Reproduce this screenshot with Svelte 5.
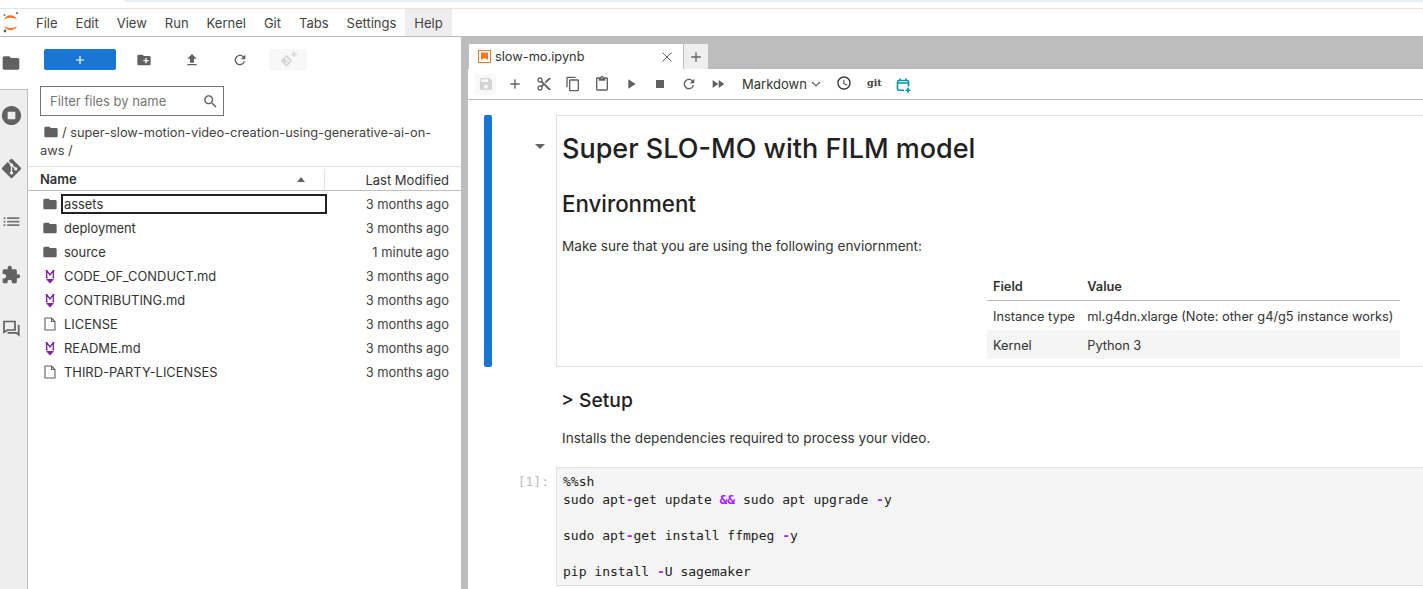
<script>
  const menus = ['File', 'Edit', 'View', 'Run', 'Kernel', 'Git', 'Tabs', 'Settings', 'Help'];
  const files = [
    { name: 'assets', kind: 'folder', time: '3 months ago', editing: true },
    { name: 'deployment', kind: 'folder', time: '3 months ago' },
    { name: 'source', kind: 'folder', time: '1 minute ago' },
    { name: 'CODE_OF_CONDUCT.md', kind: 'md', time: '3 months ago' },
    { name: 'CONTRIBUTING.md', kind: 'md', time: '3 months ago' },
    { name: 'LICENSE', kind: 'file', time: '3 months ago' },
    { name: 'README.md', kind: 'md', time: '3 months ago' },
    { name: 'THIRD-PARTY-LICENSES', kind: 'file', time: '3 months ago' }
  ];
  const codeLines = [
    [['%%sh', '']],
    [['sudo apt', ''], ['-', 'op'], ['get update ', ''], ['&&', 'op'], [' sudo apt upgrade ', ''], ['-', 'op'], ['y', '']],
    [],
    [['sudo apt', ''], ['-', 'op'], ['get install ffmpeg ', ''], ['-', 'op'], ['y', '']],
    [],
    [['pip install ', ''], ['-', 'op'], ['U sagemaker', '']]
  ];
  const P = {
    folder: 'M10 4H4c-1.1 0-1.99.9-1.99 2L2 18c0 1.1.9 2 2 2h16c1.1 0 2-.9 2-2V8c0-1.1-.9-2-2-2h-8l-2-2z',
    newFolder: 'M20 6h-8l-2-2H4c-1.11 0-1.99.89-1.99 2L2 18c0 1.11.89 2 2 2h16c1.11 0 2-.89 2-2V8c0-1.11-.89-2-2-2zm-1 8h-3v3h-2v-3h-3v-2h3V9h2v3h3v2z',
    upload: 'M9 16h6v-6h4l-7-7-7 7h4zm-4 2h14v2H5z',
    refresh: 'M17.65 6.35C16.2 4.9 14.21 4 12 4c-4.42 0-7.99 3.58-7.99 8s3.57 8 7.99 8c3.73 0 6.84-2.55 7.73-6h-2.08c-.82 2.33-3.04 4-5.65 4-3.31 0-6-2.69-6-6s2.69-6 6-6c1.66 0 3.14.69 4.22 1.78L13 11h7V4l-2.35 2.35z',
    stop: 'M12 2C6.48 2 2 6.48 2 12s4.48 10 10 10 10-4.48 10-10S17.52 2 12 2zm4 14H8V8h8v8z',
    git: 'M21.6 11L13 2.4a1.4 1.4 0 0 0-2 0L9.2 4.2l2.3 2.3a1.7 1.7 0 0 1 2.1 2.1l2.2 2.2a1.7 1.7 0 1 1-1 1l-2.1-2.1v5.4a1.7 1.7 0 1 1-1.4 0V9.7a1.7 1.7 0 0 1-.9-2.2L8 5.3 2.4 11a1.4 1.4 0 0 0 0 2l8.6 8.6a1.4 1.4 0 0 0 2 0l8.6-8.6a1.4 1.4 0 0 0 0-2z',
    toc: 'M3 13h2v-2H3v2zm0 4h2v-2H3v2zm0-8h2V7H3v2zm4 4h14v-2H7v2zm0 4h14v-2H7v2zM7 7v2h14V7H7z',
    puzzle: 'M20.5 11H19V7c0-1.1-.9-2-2-2h-4V3.5C13 2.12 11.88 1 10.5 1S8 2.12 8 3.5V5H4c-1.1 0-1.99.9-1.99 2v3.8H3.5c1.49 0 2.7 1.21 2.7 2.7s-1.21 2.7-2.7 2.7H2V20c0 1.1.9 2 2 2h3.8v-1.5c0-1.49 1.21-2.7 2.7-2.7 1.49 0 2.7 1.21 2.7 2.7V22H17c1.1 0 2-.9 2-2v-4h1.5c1.38 0 2.5-1.12 2.5-2.5S21.88 11 20.5 11z',
    search: 'M15.5 14h-.79l-.28-.27C15.41 12.59 16 11.11 16 9.5 16 5.91 13.09 3 9.5 3S3 5.91 3 9.5 5.91 16 9.5 16c1.61 0 3.09-.59 4.23-1.57l.27.28v.79l5 4.99L20.49 19l-4.99-5zm-6 0C7.01 14 5 11.99 5 9.5S7.01 5 9.5 5 14 7.01 14 9.5 11.99 14 9.5 14z',
    save: 'M17 3H5c-1.11 0-2 .9-2 2v14c0 1.1.89 2 2 2h14c1.1 0 2-.9 2-2V7l-4-4zm-5 16c-1.66 0-3-1.34-3-3s1.34-3 3-3 3 1.34 3 3-1.34 3-3 3zm3-10H5V5h10v4z',
    add: 'M19 13h-6v6h-2v-6H5v-2h6V5h2v6h6v2z',
    cut: 'M9.64 7.64c.23-.5.36-1.05.36-1.64 0-2.21-1.79-4-4-4S2 3.79 2 6s1.79 4 4 4c.59 0 1.14-.13 1.64-.36L10 12l-2.36 2.36C7.14 14.13 6.59 14 6 14c-2.21 0-4 1.79-4 4s1.79 4 4 4 4-1.79 4-4c0-.59-.13-1.14-.36-1.64L12 14l7 7h3v-1L9.64 7.64zM6 8c-1.1 0-2-.89-2-2s.9-2 2-2 2 .89 2 2-.9 2-2 2zm0 12c-1.1 0-2-.89-2-2s.9-2 2-2 2 .89 2 2-.9 2-2 2zm6-7.5c-.28 0-.5-.22-.5-.5s.22-.5.5-.5.5.22.5.5-.22.5-.5.5zM19 3l-6 6 2 2 7-7V3z',
    copy: 'M16 1H4c-1.1 0-2 .9-2 2v14h2V3h12V1zm3 4H8c-1.1 0-2 .9-2 2v14c0 1.1.9 2 2 2h11c1.1 0 2-.9 2-2V7c0-1.1-.9-2-2-2zm0 16H8V7h11v14z',
    paste: 'M19 2h-4.18C14.4.84 13.3 0 12 0c-1.3 0-2.4.84-2.82 2H5c-1.1 0-2 .9-2 2v16c0 1.1.9 2 2 2h14c1.1 0 2-.9 2-2V4c0-1.1-.9-2-2-2zm-7 0c.55 0 1 .45 1 1s-.45 1-1 1-1-.45-1-1 .45-1 1-1zm7 18H5V4h2v3h10V4h2v16z',
    run: 'M8 5v14l11-7z',
    square: 'M6 6h12v12H6z',
    ff: 'M4 18l8.5-6L4 6v12zm9-12v12l8.5-6L13 6z',
    clock: 'M11.99 2C6.47 2 2 6.48 2 12s4.47 10 9.99 10C17.52 22 22 17.52 22 12S17.52 2 11.99 2zM12 20c-4.42 0-8-3.58-8-8s3.58-8 8-8 8 3.58 8 8-3.58 8-8 8zm.5-13H11v6l5.25 3.15.75-1.23-4.5-2.67z'
  };
</script>

{#snippet icon(d, size = 16, cls = '')}
  <svg class="ic {cls}" width={size} height={size} viewBox="0 0 24 24"><path {d} /></svg>
{/snippet}

<div class="page">
  <div class="strip"><div class="pill"></div></div>
  <header class="menubar">
    <svg class="logo" width="22" height="27" viewBox="0 0 22 27">
      <path d="M4 11C5.500 4.500 15.500 4.500 17 11 14.500 8 6.500 8 4 11z" fill="#f37726" />
      <path d="M4 17C5.500 22.500 15.500 22.500 17 17 14.500 19.500 6.500 19.500 4 17z" fill="#f37726" />
      <circle cx="17" cy="4.200" r="1.100" fill="#767677" />
      <circle cx="4.400" cy="6" r="1" fill="#767677" />
      <circle cx="5" cy="22" r="1.400" fill="#616262" />
    </svg>
    <nav class="menus">
      {#each menus as m}
        <span class="menu" class:open={m === 'Help'}>{m}</span>
      {/each}
    </nav>
  </header>

  <div class="main">
    <aside class="rail">
      <div class="tab active">{@render icon(P.folder, 20)}</div>
      <div class="tab big">{@render icon(P.stop, 23)}</div>
      <div class="tab big">{@render icon(P.git, 23)}</div>
      <div class="tab">{@render icon(P.toc, 21, 'light')}</div>
      <div class="tab">{@render icon(P.puzzle, 20)}</div>
      <div class="tab">
        <svg class="chat" width="20" height="20" viewBox="0 0 20 20">
          <path d="M3 3.500h11v8.500H6.500L3 14.200z" />
          <path d="M6.500 14.800h9l2.200 2V6.800" />
        </svg>
      </div>
    </aside>

    <section class="browser">
      <div class="btoolbar">
        <button class="launch">{@render icon(P.add, 14, 'white')}</button>
        <span class="tb">{@render icon(P.newFolder, 16)}</span>
        <span class="tb">{@render icon(P.upload, 16)}</span>
        <span class="tb">{@render icon(P.refresh, 16)}</span>
        <span class="clone">
          <svg width="18" height="18" viewBox="0 0 24 24" class="ic faint">
            <path d={P.git} transform="translate(1 4) scale(.75)" />
            <path d="M19 1h2v2.500h2.500v2H21V8h-2V5.500h-2.500v-2H19z" />
          </svg>
        </span>
      </div>
      <div class="filter">
        <span>Filter files by name</span>
        {@render icon(P.search, 17)}
      </div>
      <div class="crumbs">
        <span class="crumbicon">{@render icon(P.folder, 16)}</span>/ super-slow-motion-video-creation-using-generative-ai-on-aws /
      </div>
      <div class="listhead">
        <div class="hname"><b>Name</b><i class="sort"></i></div>
        <div class="hmod">Last Modified</div>
      </div>
      <ul class="files">
        {#each files as f}
          <li>
            <span class="ficon">
              {#if f.kind === 'folder'}
                {@render icon(P.folder, 16)}
              {:else if f.kind === 'md'}
                <svg width="16" height="16" viewBox="0 0 16 16" class="md">
                  <path d="M3.500 2.600h1.300L8 6.900l3.200-4.300h1.300M4.700 2.600v7M11.300 2.600v7M3.700 9.700h2M10.300 9.700h2" />
                  <path class="mdfill" d="M3.800 11h8.400L8 15.500z" />
                </svg>
              {:else}
                <svg width="16" height="16" viewBox="0 0 16 16" class="doc">
                  <path d="M3 2h6.500L13 5.500V14H3z" /><path d="M9.500 2v3.500H13" />
                </svg>
              {/if}
            </span>
            <span class="fname" class:editing={f.editing}>{f.name}</span>
            <span class="ftime">{f.time}</span>
          </li>
        {/each}
      </ul>
    </section>

    <div class="splitter"></div>

    <section class="work">
      <div class="tabbar">
        <div class="doctab">
          <svg width="13" height="13" viewBox="0 0 13 13" class="nbicon">
            <rect x=".5" y=".5" width="12" height="12" fill="none" stroke="#f37726" />
            <path d="M3 2.500h7v7.500L6.500 8.100 3 10z" fill="#f37726" />
          </svg>
          <span class="doctitle">slow-mo.ipynb</span>
          <svg width="10" height="10" viewBox="0 0 10 10" class="close"><path d="M.5.5l9 9M9.500.5l-9 9" /></svg>
        </div>
        <div class="addtab">{@render icon(P.add, 16)}</div>
      </div>

      <div class="nbbar">
        <span class="nb saved">{@render icon(P.save, 16, 'faint')}</span>
        <span class="nb">{@render icon(P.add, 16)}</span>
        <span class="nb">{@render icon(P.cut, 16)}</span>
        <span class="nb">{@render icon(P.copy, 16)}</span>
        <span class="nb">{@render icon(P.paste, 16)}</span>
        <span class="nb">{@render icon(P.run, 16)}</span>
        <span class="nb">{@render icon(P.square, 16)}</span>
        <span class="nb">{@render icon(P.refresh, 16)}</span>
        <span class="nb">{@render icon(P.ff, 16)}</span>
        <span class="celltype">Markdown
          <svg width="10" height="6" viewBox="0 0 10 6" class="chev"><path d="M1 1l4 4 4-4" /></svg>
        </span>
        <span class="nb clock">{@render icon(P.clock, 16, 'dark')}</span>
        <span class="gitlabel">git</span>
        <span class="nb cal">
          <svg width="16" height="16" viewBox="0 0 16 16" class="calendar">
            <path d="M9 13.200H4a1.500 1.500 0 0 1-1.500-1.500V5A1.500 1.500 0 0 1 4 3.500h8A1.500 1.500 0 0 1 13.500 5v4.500" />
            <path d="M2.500 6h11M5 1.500v2.500M11 1.500v2.500" />
            <path d="M13 10.800v5M10.500 13.300h5" />
          </svg>
        </span>
      </div>

      <div class="notebook">
        <div class="mdcell">
          <div class="collapser"></div>
          <div class="gutter"><i class="caret"></i></div>
          <div class="mdbox">
            <h1>Super SLO-MO with FILM model</h1>
            <h2>Environment</h2>
            <p>Make sure that you are using the following enviornment:</p>
            <table>
              <thead><tr><th>Field</th><th>Value</th></tr></thead>
              <tbody>
                <tr><td>Instance type</td><td>ml.g4dn.xlarge (Note: other g4/g5 instance works)</td></tr>
                <tr class="alt"><td>Kernel</td><td>Python 3</td></tr>
              </tbody>
            </table>
          </div>
        </div>
        <div class="plain">
          <h3>&gt; Setup</h3>
          <p>Installs the dependencies required to process your video.</p>
        </div>
        <div class="codecell">
          <div class="prompt">[1]:</div>
          <div class="code">
            {#each codeLines as line}
              <div class="ln">{#each line as t}<span class={t[1]}>{t[0]}</span>{/each}</div>
            {/each}
          </div>
        </div>
      </div>
    </section>
  </div>
</div>

<style>
  :global(body) { margin: 0; overflow: hidden; background: #fff; }
  .page {
    width: 1423px; height: 589px; overflow: hidden; display: flex; flex-direction: column;
    font-family: Inter, "Liberation Sans", sans-serif; font-size: 13px; color: #333;
  }
  .strip { height: 8px; flex: none; border-bottom: 1px solid #e4e4e4; padding-left: 124px; }
  .pill { height: 2px; background: #e9edf8; border-radius: 0 0 0 6px; }
  .menubar {
    height: 27px; flex: none; display: flex; align-items: stretch; border-bottom: 1px solid #bdbdbd;
  }
  .logo { flex: none; }
  .menus { display: flex; margin-left: 5px; }
  .menu { padding: 0 9px; line-height: 29px; font-size: 13px; color: #424242; }
  .menu.open { background: #eeeeee; }

  .main { flex: 1; display: flex; min-height: 0; }
  .rail { width: 28px; flex: none; display: flex; flex-direction: column; background: #eee; border-right: 1px solid #bdbdbd; box-sizing: border-box; }
  .tab { height: 53px; flex: none; display: flex; align-items: center; padding: 0 0 2px 1px; box-sizing: border-box; }
  .tab.big { padding-left: 0; }
  .tab.active { background: #fff; width: 28px; border-bottom: 1px solid #bdbdbd; padding-bottom: 1px; }
  .ic { display: block; fill: #616161; flex: none; }
  .ic.white { fill: #fff; }
  .ic.light { fill: #757575; }
  .ic.faint { fill: #d4d4d4; }
  .ic.dark { fill: #333; }
  .chat { fill: none; stroke: #616161; stroke-width: 1.700; }

  .browser { width: 433px; flex: none; display: flex; flex-direction: column; min-width: 0; }
  .btoolbar { display: flex; align-items: center; height: 21px; margin: 12px 0 0 16px; }
  .launch { width: 72px; height: 21px; padding: 0; border: 0; border-radius: 2px; background: #1976d2; display: flex; align-items: center; justify-content: center; }
  .tb { width: 48px; display: flex; justify-content: center; }
  .launch + .tb { margin-left: 4px; }
  .clone { width: 38px; height: 21px; margin-left: 5px; background: #f8f8f8; display: flex; align-items: center; justify-content: center; border-radius: 2px; }

  .filter {
    width: 184px; height: 30px; box-sizing: border-box; margin: 16px 0 0 12px; border: 1px solid #757575;
    display: flex; align-items: center; justify-content: space-between; padding: 0 4px 0 9px;
    color: #757575; font-size: 13px;
  }
  .crumbs { margin: 8px 20px 0 12px; line-height: 18px; font-size: 12.800px; color: #424242; }
  .crumbicon { display: inline-block; vertical-align: -3px; margin: 0 3px 0 3px; }

  .listhead { height: 25px; margin-top: 6px; box-sizing: border-box; border-top: 1px solid #e0e0e0; border-bottom: 1px solid #bdbdbd; display: flex; font-size: 13px; align-items: center; color: #333; }
  .hname { width: 297px; box-sizing: border-box; padding: 1px 19px 0 12px; display: flex; justify-content: space-between; align-items: center; border-right: 1px solid #e0e0e0; height: 20px; }
  .hname b { font-weight: 600; }
  .sort { width: 0; height: 0; border: 4.500px solid transparent; border-top: 0; border-bottom: 5px solid #616161; }
  .hmod { flex: 1; text-align: right; padding: 2px 12px 0 0; }

  .files { list-style: none; margin: 1px 0 0; padding: 0; }
  .files li { height: 24px; display: flex; align-items: center; font-size: 12.900px; color: #333; }
  .ficon { width: 16px; margin-left: 14px; display: block; }
  .fname { margin-left: 6px; flex: none; width: 263px; line-height: 22px; height: 20px; box-sizing: border-box; }
  .fname.editing { outline: 2px solid #222; outline-offset: -2px; padding-left: 3px; margin-left: 3px; width: 266px; }
  .ftime { flex: 1; text-align: right; padding-right: 12px; color: #424242; }
  .md { display: block; fill: none; stroke: #7b1fa2; stroke-width: 1.300; }
  .md .mdfill { fill: #7b1fa2; stroke: none; }
  .doc { display: block; fill: none; stroke: #616161; stroke-width: 1.100; }

  .splitter { width: 7px; flex: none; background: #bdbdbd; }

  .work { flex: 1; min-width: 0; display: flex; flex-direction: column; }
  .tabbar { height: 32px; flex: none; display: flex; background: #bdbdbd; align-items: flex-end; padding-left: 1px; }
  .doctab { width: 214px; height: 25px; background: #fff; display: flex; align-items: center; }
  .nbicon { margin-left: 9px; flex: none; }
  .doctitle { margin-left: 4px; font-size: 12.800px; color: #333; flex: 1; }
  .close { margin-right: 11px; fill: none; stroke: #616161; stroke-width: 1; }
  .addtab { width: 24px; height: 25px; margin-left: 1px; background: #eee; display: flex; align-items: center; justify-content: center; }

  .nbbar { height: 31px; flex: none; display: flex; align-items: center; padding-left: 7px; border-bottom: 1px solid #bdbdbd; box-sizing: border-box; }
  .nb { width: 21px; height: 21px; margin-right: 8px; display: flex; align-items: center; justify-content: center; flex: none; }
  .nb.saved { background: #f8f8f8; border-radius: 2px; }
  .celltype { margin-left: 6px; width: 91px; flex: none; font-size: 13px; color: #333; display: flex; align-items: center; gap: 4px; }
  .chev { fill: none; stroke: #616161; stroke-width: 1.100; }
  .clock { margin-right: 13px; margin-top: -3px; }
  .gitlabel { font-family: "DejaVu Serif", serif; font-size: 9.500px; font-weight: 700; width: 25.500px; flex: none; margin-top: -3px; color: #424242; }
  .cal { margin-right: 0; margin-top: 1px; }
  .calendar { fill: none; stroke: #0097a7; stroke-width: 1.600; }

  .notebook { flex: 1; min-height: 0; overflow: hidden; color: #212121; }
  .mdcell { display: flex; margin-top: 15px; height: 252px; }
  .collapser { width: 8px; margin-left: 16px; flex: none; background: #1976d2; border-radius: 2px; }
  .gutter { width: 64px; flex: none; position: relative; }
  .caret { position: absolute; left: 43px; top: 29px; width: 0; height: 0; border: 5.500px solid transparent; border-bottom: 0; border-top: 5px solid #616161; }
  .mdbox { flex: 1; border: 1px solid #e0e0e0; border-right: 0; box-sizing: border-box; padding: 0 23px 0 5px; display: flex; flex-direction: column; min-width: 0; }
  h1 { font-size: 27px; line-height: 32px; margin: 17px 0 0; font-weight: 500; }
  h2 { font-size: 22.300px; line-height: 28px; margin: 25px 0 0; font-weight: 500; }
  p { font-size: 13.600px; line-height: 18px; margin: 19px 0 0; color: #333; }
  table { border-collapse: collapse; margin: 17px 0 0 auto; font-size: 12.800px; color: #333; width: 413px; }
  th { text-align: left; font-weight: 600; padding: 0 6px; height: 28px; border-bottom: 1px solid #bdbdbd; white-space: nowrap; }
  td { padding: 2px 6px 0; height: 29px; box-sizing: border-box; white-space: nowrap; }
  .alt td { background: #f5f5f5; }
  .plain { margin-left: 93px; }
  h3 { font-size: 19.300px; line-height: 24px; margin: 21px 0 0; font-weight: 500; }
  .plain p { margin-top: 17px; padding-left: 1px; }
  .codecell { display: flex; margin-top: 20px; }
  .prompt { width: 88px; flex: none; font-family: "DejaVu Sans Mono", monospace; font-size: 13px; color: #bdbdbd; text-align: right; padding-right: 7px; box-sizing: border-box; line-height: 18px; padding-top: 6px; }
  .code {
    flex: 1; height: 119px; box-sizing: border-box; background: #f5f5f5; border: 1px solid #e0e0e0; border-right: 0;
    padding: 5px 6px 0; font-family: "DejaVu Sans Mono", monospace; font-size: 13px; line-height: 18px; color: #212121;
  }
  .ln { height: 18px; white-space: pre; }
  .op { color: #aa22ff; font-weight: 700; }
</style>
